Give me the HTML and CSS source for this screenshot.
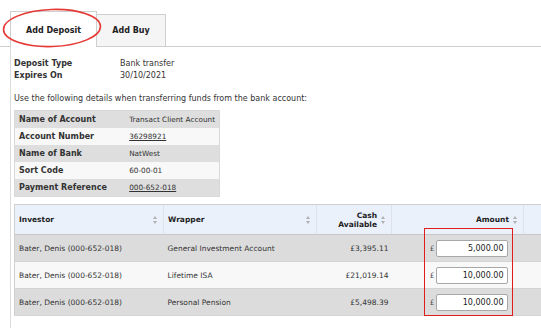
FILE: index.html
```
<!DOCTYPE html>
<html>
<head>
<meta charset="utf-8">
<link rel="stylesheet" href="styles.css">
</head>
<body>
<div class="page">
  <div class="tabs">
    <div class="tab active">Add Deposit</div>
    <div class="tab">Add Buy</div>
  </div>
  <div class="panel">
    <div class="info">
      <span class="lbl">Deposit Type</span><span>Bank transfer</span>
      <span class="lbl">Expires On</span><span>30/10/2021</span>
    </div>
    <p class="note">Use the following details when transferring funds from the bank account:</p>
    <table class="bank">
      <tr><th>Name of Account</th><td>Transact Client Account</td></tr>
      <tr><th>Account Number</th><td><u>36298921</u></td></tr>
      <tr><th>Name of Bank</th><td>NatWest</td></tr>
      <tr><th>Sort Code</th><td>60-00-01</td></tr>
      <tr><th>Payment Reference</th><td><u>000-652-018</u></td></tr>
    </table>
    <table class="grid">
      <colgroup><col class="c1"><col class="c2"><col class="c3"><col class="c4"><col class="c5"></colgroup>
      <thead>
        <tr>
          <th><div class="hd"><span>Investor</span><i class="sort"></i></div></th>
          <th><div class="hd"><span>Wrapper</span><i class="sort"></i></div></th>
          <th><div class="hd right"><span>Cash<br>Available</span><i class="sort"></i></div></th>
          <th><div class="hd right"><span>Amount</span><i class="sort"></i></div></th>
          <th></th>
        </tr>
      </thead>
      <tbody>
        <tr class="odd"><td>Bater, Denis (000-652-018)</td><td>General Investment Account</td><td class="num">£3,395.11</td><td class="amt"><span class="cur">£</span><span class="inp">5,000.00</span></td><td></td></tr>
        <tr class="even"><td>Bater, Denis (000-652-018)</td><td>Lifetime ISA</td><td class="num">£21,019.14</td><td class="amt"><span class="cur">£</span><span class="inp">10,000.00</span></td><td></td></tr>
        <tr class="odd"><td>Bater, Denis (000-652-018)</td><td>Personal Pension</td><td class="num">£5,498.39</td><td class="amt"><span class="cur">£</span><span class="inp">10,000.00</span></td><td></td></tr>
      </tbody>
    </table>
  </div>
  <svg class="ellipse" width="104" height="44" viewBox="0 0 104 44"><ellipse cx="52" cy="22" rx="48.5" ry="18.5" fill="none" stroke="#e53935" stroke-width="1.6" transform="rotate(-2 52 22)"/></svg>
  <div class="highlight"></div>
</div>
</body>
</html>
```
FILE: styles.css
```
html, body { margin: 0; padding: 0; background: #fff; }
body { font-family: "DejaVu Sans", Verdana, sans-serif; font-size: 8px; color: #333; }
.page { position: relative; width: 541px; height: 328px; overflow: hidden; }
.tabs { display: flex; align-items: flex-end; padding: 11px 0 0 10px; height: 35px; border-bottom: 1px solid #cfcfcf; }
.tab { box-sizing: border-box; display: flex; align-items: center; justify-content: center; font-weight: bold; font-size: 8px; color: #222; border: 1px solid #cfcfcf; border-bottom: none; }
.tab.active { width: 87px; height: 36px; background: #fff; margin-bottom: -1px; padding-top: 2px; }
.tab:not(.active) { width: 69px; height: 32px; background: #f5f5f5; border-left: none; }
.panel { margin-left: 10px; border-left: 1px solid #dcdcdc; padding: 12px 0 0 3px; height: 300px; }
.info { display: grid; grid-template-columns: 106px auto; row-gap: 3px; line-height: 9px; }
.lbl { font-weight: bold; }
.note { margin: 14px 0 0; line-height: 9px; }
.bank { margin-top: 7px; border-collapse: collapse; width: 206px; font-size: 7.3px; border: 1px solid #d9d9d9; }
.bank th, .bank td { height: 17px; padding: 0 4px; text-align: left; white-space: nowrap; }
.bank th { width: 109px; font-size: 8px; }
.bank tr:nth-child(odd) { background: #dedede; }
.bank tr:nth-child(even) { background: #f8f8f8; }
.grid { margin-top: 7px; border-collapse: collapse; table-layout: fixed; width: 545px; font-size: 7.5px; }
.c1 { width: 149px; } .c2 { width: 153px; } .c3 { width: 75px; } .c4 { width: 132px; } .c5 { width: 36px; }
.grid thead th { background: #eaf1fb; height: 29px; padding: 0 5px 0 4px; border-top: 1px solid #cfcfcf; border-bottom: 1px solid #c8c8c8; border-left: 1px solid #dde3ea; font-size: 7.5px; color: #222; text-align: left; }
.grid thead th:first-child { border-left: 1px solid #cfcfcf; }
.hd { display: flex; align-items: center; justify-content: space-between; line-height: 9px; }
.hd.right { justify-content: flex-end; gap: 4px; text-align: right; }
.sort { display: inline-block; width: 5px; height: 8px; position: relative; flex: none; }
.sort::before, .sort::after { content: ""; position: absolute; left: 0; border-left: 2.5px solid transparent; border-right: 2.5px solid transparent; }
.sort::before { top: 0; border-bottom: 3px solid #b0b0b0; }
.sort::after { bottom: 0; border-top: 3px solid #b0b0b0; }
.grid tbody td { height: 26px; padding: 0 4px; border-bottom: 1px solid #d4d4d4; white-space: nowrap; overflow: hidden; }
.grid tbody td:first-child { border-left: 1px solid #cfcfcf; }
.grid tr.odd td { background: #dcdcdc; }
.grid tr.even td { background: #f8f8f8; }
.grid td.num { text-align: right; padding-right: 3px; }
.grid td.amt { text-align: right; padding-right: 16px; }
.cur { display: inline-block; margin-right: 1px; color: #555; vertical-align: middle; }
.inp { display: inline-block; box-sizing: border-box; width: 72px; height: 17px; line-height: 15px; padding-right: 3px; background: #fff; border: 1px solid #a8a8a8; border-radius: 2px; text-align: right; font-size: 8px; color: #222; vertical-align: middle; }
.ellipse { position: absolute; left: 0; top: 6px; }
.highlight { position: absolute; left: 424px; top: 228px; width: 87px; height: 86px; border: 1.5px solid #e21b1b; }
```
